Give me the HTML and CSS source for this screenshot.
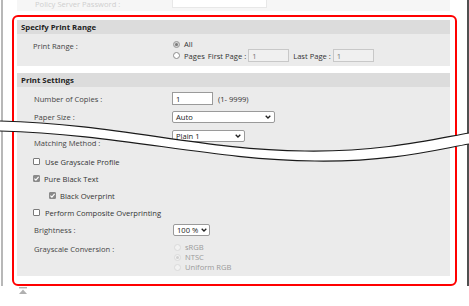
FILE: index.html
```html
<html>
	<head>
		<link rel="stylesheet" href="styles.css">
	</head>

	<body>

		<div class="Screen">

			<div class="Faded">
				<div class="FadedLabel">Policy Server Password :</div>
				<div class="FadedInput"></div>
			</div>

			<div class="Highlight">

				<div class="SectionHead">Specify Print Range</div>
				<div class="SectionBody Range">
					<div class="Label">Print Range :</div>
					<div class="Options">
						<div class="Opt Short"><span class="Radio On"></span>All</div>
						<div class="Opt Tall">
							<span class="Radio"></span>Pages
							<span class="Sub">First Page :</span>
							<span class="Field Off">1</span>
							<span class="Sub Last">Last Page :</span>
							<span class="Field Off">1</span>
						</div>
					</div>
				</div>

				<div class="SectionHead Second">Print Settings</div>
				<div class="SectionBody Settings">

					<div class="Row">
						<div class="Label">Number of Copies :</div>
						<span class="Field Copies">1</span>
						<span class="Hint">(1- 9999)</span>
					</div>

					<div class="Row Paper">
						<div class="Label">Paper Size :</div>
						<span class="Select W-paper">Auto<svg viewBox="0 0 6 4"><polyline points="0.7,0.7 3,3 5.3,0.7"/></svg></span>
					</div>

					<div class="Row Cut">
						<div class="Label">Matching Method :</div>
						<span class="Select W-plain">Plain 1<svg viewBox="0 0 6 4"><polyline points="0.7,0.7 3,3 5.3,0.7"/></svg></span>
					</div>

					<div class="Row Check"><span class="Box"></span>Use Grayscale Profile</div>
					<div class="Row Check"><span class="Box On"><svg viewBox="0 0 8 8"><polyline points="1.6,4.2 3.3,5.8 6.4,2.2"/></svg></span>Pure Black Text</div>
					<div class="Row Check Inner"><span class="Box On"><svg viewBox="0 0 8 8"><polyline points="1.6,4.2 3.3,5.8 6.4,2.2"/></svg></span>Black Overprint</div>
					<div class="Row Check"><span class="Box"></span>Perform Composite Overprinting</div>

					<div class="Row">
						<div class="Label">Brightness :</div>
						<span class="Select W-bright">100 %<svg viewBox="0 0 6 4"><polyline points="0.7,0.7 3,3 5.3,0.7"/></svg></span>
					</div>

					<div class="Row Gray">
						<div class="Label">Grayscale Conversion :</div>
						<div class="Options">
							<div class="Opt Dim"><span class="Radio Pale"></span>sRGB</div>
							<div class="Opt Dim"><span class="Radio Pale Dot"></span>NTSC</div>
							<div class="Opt Dim"><span class="Radio Pale"></span>Uniform RGB</div>
						</div>
					</div>

				</div>
			</div>
		</div>

		<div class="ToTop">
			<svg viewBox="0 0 8 7"><rect x="0" y="0" width="8" height="1.4"/><polygon points="4,2.4 8,7 0,7"/></svg>
		</div>

		<!-- break mark drawn over the page -->
		<svg class="Break" viewBox="0 0 469 306">
			<path class="BreakFill" d="M0 121 C120 124 200 150 305 151 C380 152 430 140 469 133 L469 144 C435 150 390 162 315 161 C210 160 120 134 0 131 Z"/>
			<path class="BreakLine" d="M0 121 C120 124 200 150 305 151 C380 152 430 140 469 133"/>
			<path class="BreakLine" d="M0 131 C120 134 210 160 315 161 C390 162 435 150 469 144"/>
		</svg>

	</body>
</html>
```

FILE: styles.css
```css
body{
	margin: 0;
	height: 306px;
	overflow: hidden;
	position: relative;
	background: #fff;
	font-family: "Open Sans", "Noto Sans", sans-serif;
	font-size: 7.6px;
	color: #444;
	white-space: nowrap;
}
div.Screen{
	margin-left: 1px;
	height: 286px;
	border-left: 2px solid #b8b8b8;
	border-right: 2px solid #505050;
}
div.Faded{
	display: flex;
	height: 11px;
	margin: 0 17px 4px 14px;
	background: #f6f6f6;
}
div.FadedLabel{
	width: 155px;
	box-sizing: border-box;
	padding-left: 18px;
	margin-top: -1px;
	line-height: 10px;
	color: #cfcfcf;
}
div.FadedInput{
	width: 95px;
	height: 13px;
	margin-top: -5px;
	box-sizing: border-box;
	background: #fff;
	border: 1px solid #e8e8e8;
}
div.Highlight{
	margin: 0 10px 0 9px;
	height: 264px;
	border: 2px solid #f00;
	border-radius: 6px;
	padding: 3px 5px 0 3px;
}
div.SectionHead{
	height: 14px;
	line-height: 14px;
	padding-left: 4px;
	background: #dcdcdc;
	font-weight: 700;
	font-size: 7.8px;
	color: #222;
}
div.SectionHead.Second{
	margin-top: 7px;
}
div.SectionBody{
	background: #ebebeb;
}
div.Range{
	display: flex;
	height: 32px;
	box-sizing: border-box;
	padding-top: 5px;
}
div.Label{
	width: 155px;
	flex: none;
	box-sizing: border-box;
	padding-left: 17px;
	line-height: 10px;
}
div.Range > div.Label{
	margin-top: 2px;
	padding-left: 16px;
}
div.Options{
	display: flex;
	flex-direction: column;
}
div.Opt{
	display: flex;
	align-items: center;
	height: 10px;
	color: #333;
}
div.Opt.Tall{
	height: 13px;
}
div.Opt.Dim{
	color: #9a9a9a;
}
span.Radio{
	width: 7px;
	height: 7px;
	box-sizing: border-box;
	border: 1px solid #8c8c8c;
	border-radius: 50%;
	background: #fff;
	margin: 0 4px 0 1px;
	display: flex;
	align-items: center;
	justify-content: center;
}
span.Radio.On{
	background: #d4d4d4;
	border-color: #9a9a9a;
}
span.Radio.On::after, span.Radio.Dot::after{
	content: "";
	width: 3px;
	height: 3px;
	border-radius: 50%;
	background: #7a7a7a;
}
span.Radio.Pale{
	border-color: #dadada;
	background: #f2f2f2;
	margin-left: 2px;
}
span.Radio.Pale.Dot::after{
	background: #d0d0d0;
}
span.Sub{
	margin: 0 2px 0 3px;
}
span.Sub.Last{
	margin-left: 4px;
}
span.Field{
	display: inline-flex;
	align-items: center;
	width: 41px;
	height: 13px;
	box-sizing: border-box;
	padding-left: 3px;
	border: 1px solid #c8c8c8;
	background: #f0f0f0;
	color: #777;
}
span.Field.Copies{
	background: #fff;
	border-color: #9a9a9a;
	color: #222;
}
span.Hint{
	margin-left: 5px;
	color: #333;
}
div.Settings{
	height: 189px;
	box-sizing: border-box;
	padding-top: 3px;
}
div.Row{
	display: flex;
	align-items: center;
	height: 17px;
}
div.Row.Paper{
	height: 20px;
}
div.Row.Cut{
	height: 26px;
	align-items: flex-start;
}
div.Row.Cut > div.Label{
	margin-top: 11px;
}
div.Row.Cut > span.Select{
	margin-top: 3px;
}
span.Select{
	display: inline-flex;
	align-items: center;
	justify-content: space-between;
	height: 12px;
	box-sizing: border-box;
	padding: 0 3px 0 3px;
	border: 1px solid #9a9a9a;
	border-radius: 2px;
	background: #fff;
	color: #222;
}
span.Select svg{
	width: 6px;
	height: 4px;
	flex: none;
	margin-left: 3px;
	fill: none;
	stroke: #222;
	stroke-width: 1.3;
}
span.W-paper{ width: 103px; }
span.W-plain{ width: 73px; }
span.W-bright{ width: 37px; margin-left: 1px; }
div.Row.Check{
	padding-left: 16px;
	color: #333;
}
div.Row.Check.Inner{
	padding-left: 32px;
}
span.Box{
	width: 7px;
	height: 7px;
	box-sizing: border-box;
	border: 1px solid #7a7a7a;
	border-radius: 1px;
	background: #fff;
	margin-right: 5px;
	display: flex;
}
span.Box.On{
	background: #8a8a8a;
	border-color: #8a8a8a;
	margin-right: 4px;
}
span.Box svg{
	width: 7px;
	height: 7px;
	margin: -1px;
	fill: none;
	stroke: #fff;
	stroke-width: 1.3;
}
div.Row.Gray{
	align-items: flex-start;
	height: auto;
	padding-top: 4px;
}
div.Row.Gray > div.Label{
	margin-top: 2px;
}
div.ToTop{
	margin: 1px 0 0 19px;
	width: 8px;
	height: 7px;
}
div.ToTop svg{
	width: 8px;
	height: 7px;
	fill: #b0b0b0;
	display: block;
}
svg.Break{
	position: absolute;
	left: 0;
	top: 0;
	width: 469px;
	height: 306px;
}
path.BreakFill{
	fill: #fff;
}
path.BreakLine{
	fill: none;
	stroke: #1a1a1a;
	stroke-width: 1.2;
}
```
